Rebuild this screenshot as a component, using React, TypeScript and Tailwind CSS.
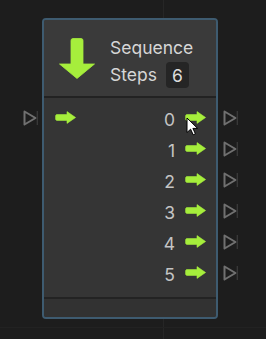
import React from "react";

const LIME = "#a6ee3c";

function RightArrow() {
  return (
    <svg width="21" height="13" viewBox="0 0 21 13">
      <path
        d="M2 3.6 H12 V0.6 L20.6 6.5 L12 12.4 V9.4 H2 Q0.6 9.4 0.6 8 V5 Q0.6 3.6 2 3.6 Z"
        fill={LIME}
        stroke={LIME}
        strokeWidth="0.6"
        strokeLinejoin="round"
      />
    </svg>
  );
}

function DownArrow() {
  return (
    <svg width="36" height="41" viewBox="0 0 36 41">
      <path
        d="M14 0.5 H22 Q24 0.5 24 2.5 V26 H35.5 L18 40.5 L0.5 26 H12 V2.5 Q12 0.5 14 0.5 Z"
        fill={LIME}
        stroke={LIME}
        strokeWidth="0.8"
        strokeLinejoin="round"
      />
    </svg>
  );
}

function Port() {
  return (
    <svg width="15" height="16" viewBox="0 0 15 16">
      <path d="M1.5 1.5 L12.5 8 L1.5 14.5 Z" fill="none" stroke="#707070" strokeWidth="2" strokeLinejoin="round" />
      <line x1="14.3" y1="1" x2="14.3" y2="15" stroke="#3c3c3c" strokeWidth="1.2" />
    </svg>
  );
}

function Cursor() {
  return (
    <svg width="13" height="19" viewBox="0 0 13 19">
      <path
        d="M1 1 V15.5 L4.6 12.2 L7.2 17.8 L9.4 16.8 L6.9 11.4 H11.6 Z"
        fill="#ffffff"
        stroke="#000000"
        strokeWidth="1"
        strokeLinejoin="round"
      />
    </svg>
  );
}

const steps = [0, 1, 2, 3, 4, 5];

export default function App() {
  return (
    <div
      className="relative w-[266px] h-[339px] overflow-hidden bg-[#1d1d1d]"
      style={{ fontFamily: "Inter, 'Noto Sans', sans-serif" }}
    >
      {/* faint canvas grid */}
      <div className="absolute left-[163px] top-0 h-full w-px bg-[#262626]" />
      <div className="absolute left-0 top-[327px] w-full h-px bg-[#222222]" />

      <div className="relative flex pt-[18px] pl-[23px]">
        {/* input ports */}
        <div className="flex flex-col pt-[84px] w-[15px]">
          <div className="h-[31px] flex items-center">
            <Port />
          </div>
        </div>

        {/* node */}
        <div className="ml-[4px] w-[176px] h-[301px] rounded-[4px] border-2 border-[#3e5b70] bg-[#343434] flex flex-col overflow-hidden">
          <div className="h-[76px] bg-[#3a3a3a] flex items-start shrink-0">
            <div className="ml-[15px] mt-[18px]">
              <DownArrow />
            </div>
            <div className="ml-[15px] mt-[15px] text-[17.5px] leading-[25px] text-[#d6d6d6]">
              <div>Sequence</div>
              <div className="flex items-center">
                <span>Steps</span>
                <span className="ml-[9px] mt-[2px] w-[23px] h-[26px] rounded-[4px] bg-[#252525] flex items-center justify-center text-[#dcdcdc]">
                  6
                </span>
              </div>
            </div>
          </div>
          <div className="h-[2px] bg-[#222222] shrink-0" />
          <div className="flex-1 pt-[4px] bg-[#353535]">
            {steps.map((s) => (
              <div key={s} className="h-[31px] flex items-center pr-[10px]">
                <div className="w-[32px] pl-[11px] flex items-center">
                  {s === 0 && <RightArrow />}
                </div>
                <div className="flex-1 flex items-center justify-end">
                  <span className="text-[17.5px] leading-none text-[#c4c4c4] mt-[5px] mr-[10px]">{s}</span>
                  <RightArrow />
                </div>
              </div>
            ))}
          </div>
          <div className="h-[2px] bg-[#232323] shrink-0" />
          <div className="h-[18px] bg-[#323232] shrink-0" />
        </div>

        {/* output ports */}
        <div className="ml-[5px] flex flex-col pt-[84px]">
          {steps.map((s) => (
            <div key={s} className="h-[31px] flex items-center">
              <Port />
            </div>
          ))}
        </div>
      </div>

      <div className="absolute left-[186px] top-[117px]">
        <Cursor />
      </div>
    </div>
  );
}
